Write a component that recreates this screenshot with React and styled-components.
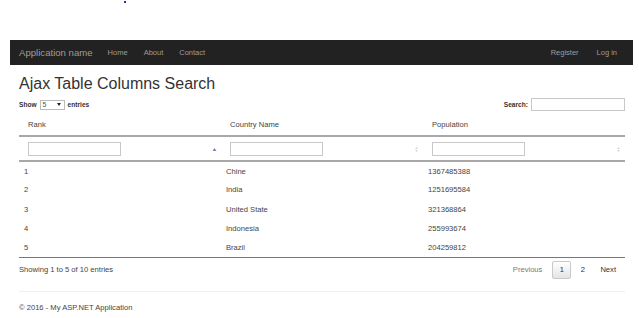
import React from 'react';
import styled, { createGlobalStyle } from 'styled-components';

const GlobalStyle = createGlobalStyle`
    html, body {
        margin: 0;
        padding: 0;
        background: #fff;
    }
    body {
        font-family: "Liberation Sans", Arial, sans-serif;
        color: #333;
    }
`;

const TopStrip = styled.div`
    height: 40px;
    display: flex;
    align-items: flex-start;
    padding-left: 124px;
    box-sizing: border-box;
`;

const Dot = styled.span`
    display: block;
    width: 2px;
    height: 2px;
    margin-top: 1px;
    background: #2a2ab8;
`;

const Navbar = styled.nav`
    margin-left: 10px;
    width: 623px;
    height: 25px;
    background: #222;
    display: flex;
    align-items: center;
    box-sizing: border-box;
    padding-right: 7px;
`;

const Brand = styled.a`
    font-size: 9.6px;
    color: #9d9d9d;
    padding: 0 7px 0 9px;
    text-decoration: none;
`;

const NavLink = styled.a`
    font-size: 7.5px;
    color: #9d9d9d;
    padding: 0 ${p => (p.$wide ? 9 : 8)}px;
    text-decoration: none;
`;

const NavGroup = styled.div`
    display: flex;
    align-items: center;
    margin-left: ${p => (p.$right ? 'auto' : '0')};
`;

const Container = styled.main`
    padding: 0 14px 0 19px;
`;

const Title = styled.h2`
    margin: 9.5px 0 6px;
    font-size: 16px;
    line-height: 17.6px;
    font-weight: 400;
    color: #333;
`;

const Controls = styled.div`
    display: flex;
    align-items: center;
    justify-content: space-between;
    height: 13px;
    font-size: 6.6px;
    font-weight: 700;
    color: #333;
`;

const Label = styled.label`
    display: flex;
    align-items: center;
    gap: 3px;
`;

const SelectBox = styled.span`
    display: inline-flex;
    align-items: center;
    justify-content: space-between;
    width: 25px;
    height: 10px;
    box-sizing: border-box;
    border: 1px solid #bbb;
    padding: 0 3px 0 2px;
    font-weight: 400;
    font-size: 7px;
    color: #555;
    background: #fff;
`;

const TextInput = styled.input`
    box-sizing: border-box;
    width: ${p => p.$w}px;
    height: ${p => p.$h}px;
    border: 1px solid #c8c8c8;
    padding: 0;
    margin: 0;
    background: #fff;
    outline: none;
`;

const Table = styled.table`
    margin-top: 3px;
    width: 606px;
    border-collapse: collapse;
    table-layout: fixed;
    font-size: 7.6px;
    color: #444;
`;

const HeadCell = styled.th`
    text-align: left;
    font-weight: 400;
    height: 22px;
    padding: 0 0 0 9px;
    box-sizing: border-box;
    border-bottom: 2px solid #a8a8a8;
`;

const FilterCell = styled.th`
    position: relative;
    text-align: left;
    height: 25px;
    padding: 0 0 0 9px;
    box-sizing: border-box;
    border-bottom: 2px solid #a8a8a8;
    vertical-align: middle;
`;

const SortIcon = styled.svg`
    position: absolute;
    right: 4px;
    top: 9px;
`;

const BodyCell = styled.td`
    height: 19.2px;
    padding: 0 0 0 5px;
    box-sizing: border-box;
`;

const BodyRow = styled.tr`
    &:last-child td {
        border-bottom: 1px solid #777;
    }
`;

const InfoRow = styled.div`
    display: flex;
    align-items: center;
    justify-content: space-between;
    height: 18px;
    margin-top: 3px;
    font-size: 7.6px;
    color: #444;
`;

const Pager = styled.div`
    display: flex;
    align-items: center;
    padding-right: 3px;
`;

const PageButton = styled.a`
    display: inline-flex;
    align-items: center;
    justify-content: center;
    box-sizing: border-box;
    height: 18px;
    min-width: 19px;
    padding: 0 ${p => (p.$pad ?? 5)}px;
    margin-left: ${p => p.$ml ?? 0}px;
    color: ${p => (p.$muted ? '#777' : '#333')};
    border: 1px solid ${p => (p.$current ? '#c9c9c9' : 'transparent')};
    border-radius: 2px;
    background: ${p => (p.$current ? 'linear-gradient(#fff, #e4e4e4)' : 'transparent')};
    text-decoration: none;
`;

const Rule = styled.hr`
    margin: 12px 0 0;
    width: 606px;
    border: 0;
    border-top: 1px solid #f0f0f0;
`;

const Footer = styled.footer`
    margin-top: 10px;
    font-size: 7.6px;
    line-height: 11px;
    color: #444;
`;

const AscIcon = () => (
    <SortIcon width="5" height="7" viewBox="0 0 5 7">
        <path d="M0.5 5 L2.5 2 L4.5 5 Z" fill="#7f7fc0" />
    </SortIcon>
);

const BothIcon = () => (
    <SortIcon width="5" height="7" viewBox="0 0 5 7">
        <path d="M1 3 L2.5 1 L4 3 Z" fill="#d6d6d6" />
        <path d="M1 4 L2.5 6 L4 4 Z" fill="#d6d6d6" />
    </SortIcon>
);

const rows = [
    [1, 'Chine', '1367485388'],
    [2, 'India', '1251695584'],
    [3, 'United State', '321368864'],
    [4, 'Indonesia', '255993674'],
    [5, 'Brazil', '204259812']
];

const columns = ['Rank', 'Country Name', 'Population'];

export default function App() {
    return (
        <>
            <GlobalStyle />
            <TopStrip>
                <Dot />
            </TopStrip>
            <Navbar>
                <Brand href="#">Application name</Brand>
                <NavGroup>
                    <NavLink href="#">Home</NavLink>
                    <NavLink href="#">About</NavLink>
                    <NavLink href="#">Contact</NavLink>
                </NavGroup>
                <NavGroup $right>
                    <NavLink href="#" $wide>Register</NavLink>
                    <NavLink href="#" $wide>Log in</NavLink>
                </NavGroup>
            </Navbar>
            <Container>
                <Title>Ajax Table Columns Search</Title>
                <Controls>
                    <Label>
                        Show
                        <SelectBox>
                            5
                            <svg width="4" height="3" viewBox="0 0 4 3">
                                <path d="M0 0 L4 0 L2 3 Z" fill="#222" />
                            </svg>
                        </SelectBox>
                        entries
                    </Label>
                    <Label>
                        Search:
                        <TextInput $w={94} $h={13} />
                    </Label>
                </Controls>
                <Table>
                    <thead>
                        <tr>
                            {columns.map(c => (
                                <HeadCell key={c}>{c}</HeadCell>
                            ))}
                        </tr>
                        <tr>
                            {columns.map((c, i) => (
                                <FilterCell key={c}>
                                    <TextInput $w={93} $h={14} style={{ display: 'block' }} />
                                    {i === 0 ? <AscIcon /> : <BothIcon />}
                                </FilterCell>
                            ))}
                        </tr>
                    </thead>
                    <tbody>
                        {rows.map(r => (
                            <BodyRow key={r[0]}>
                                <BodyCell>{r[0]}</BodyCell>
                                <BodyCell>{r[1]}</BodyCell>
                                <BodyCell>{r[2]}</BodyCell>
                            </BodyRow>
                        ))}
                    </tbody>
                </Table>
                <InfoRow>
                    <span>Showing 1 to 5 of 10 entries</span>
                    <Pager>
                        <PageButton $muted $pad={0}>Previous</PageButton>
                        <PageButton $current $ml={9}>1</PageButton>
                        <PageButton $ml={2}>2</PageButton>
                        <PageButton $ml={2}>Next</PageButton>
                    </Pager>
                </InfoRow>
                <Rule />
                <Footer>© 2016 - My ASP.NET Application</Footer>
            </Container>
        </>
    );
}
